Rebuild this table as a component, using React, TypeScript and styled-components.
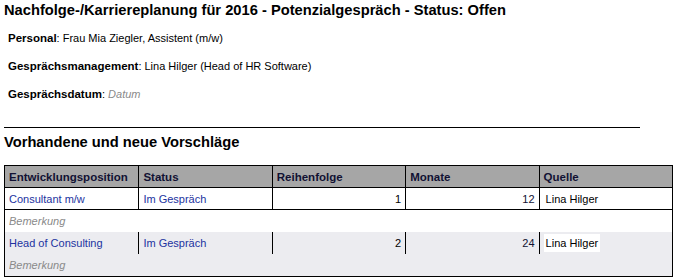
import React from "react";
import styled, { createGlobalStyle } from "styled-components";

const Global = createGlobalStyle`
  html, body { margin: 0; padding: 0; background: #fff; }
  body { font-family: "Liberation Sans", Arial, sans-serif; color: #000; }
`;

const Page = styled.div`
  padding: 0 5px 0 4px;
`;

const Title = styled.h1`
  margin: 0;
  padding-top: 1px;
  font-size: 14.7px;
  font-weight: bold;
  line-height: 18px;
`;

const Facts = styled.div`
  display: flex;
  flex-direction: column;
  gap: 10px;
  padding: 10px 0 0 4px;
`;

const Fact = styled.div`
  font-size: 11px;
  line-height: 18px;
`;

const Label = styled.span`
  font-weight: bold;
  font-size: 11.5px;
`;

const Placeholder = styled.span`
  color: #8a8a8a;
  font-style: italic;
`;

const Rule = styled.hr`
  margin: 24px 0 0 0;
  width: 636px;
  border: 0;
  border-top: 1px solid #000;
`;

const Section = styled.h2`
  margin: 5px 0 0 0;
  font-size: 14.7px;
  line-height: 18px;
  font-weight: bold;
`;

const Table = styled.div`
  margin-top: 14px;
  width: 669px;
  border: 1px solid #000;
  box-sizing: border-box;
  font-size: 11px;
`;

const Row = styled.div<{ $bg?: string; $line?: boolean }>`
  display: grid;
  grid-template-columns: repeat(5, 1fr);
  height: 22px;
  background: ${(p) => p.$bg ?? "#fff"};
  border-bottom: ${(p) => (p.$line ? "1px solid #000" : "none")};
  box-sizing: border-box;
`;

const Cell = styled.div<{ $right?: boolean; $first?: boolean; $color?: string }>`
  display: flex;
  align-items: center;
  justify-content: ${(p) => (p.$right ? "flex-end" : "flex-start")};
  padding: 0 4px;
  border-left: ${(p) => (p.$first ? "none" : "1px solid #000")};
  color: ${(p) => p.$color ?? "#000"};
  white-space: nowrap;
`;

const HeadCell = styled(Cell)`
  font-weight: bold;
  font-size: 11.5px;
  color: #111133;
`;

const NoteRow = styled.div<{ $bg?: string }>`
  height: 22px;
  display: flex;
  align-items: center;
  padding: 0 4px;
  background: ${(p) => p.$bg ?? "#fff"};
  color: #8a8a8a;
  font-style: italic;
  box-sizing: border-box;
`;

const Source = styled.span`
  background: #fff;
  padding: 3px 2px;
`;

const LINK = "#2233a0";

type Entry = { position: string; status: string; order: string; months: string; source: string };

const entries: Entry[] = [
  { position: "Consultant m/w", status: "Im Gespräch", order: "1", months: "12", source: "Lina Hilger" },
  { position: "Head of Consulting", status: "Im Gespräch", order: "2", months: "24", source: "Lina Hilger" },
];

export default function App() {
  return (
    <Page>
      <Global />
      <Title>Nachfolge-/Karriereplanung für 2016 - Potenzialgespräch - Status: Offen</Title>
      <Facts>
        <Fact>
          <Label>Personal</Label>: Frau Mia Ziegler, Assistent (m/w)
        </Fact>
        <Fact>
          <Label>Gesprächsmanagement</Label>: Lina Hilger (Head of HR Software)
        </Fact>
        <Fact>
          <Label>Gesprächsdatum</Label>: <Placeholder>Datum</Placeholder>
        </Fact>
      </Facts>
      <Rule />
      <Section>Vorhandene und neue Vorschläge</Section>
      <Table>
        <Row $bg="#a6a6a6" $line>
          <HeadCell $first>Entwicklungsposition</HeadCell>
          <HeadCell>Status</HeadCell>
          <HeadCell>Reihenfolge</HeadCell>
          <HeadCell>Monate</HeadCell>
          <HeadCell>Quelle</HeadCell>
        </Row>
        {entries.map((e, i) => {
          const bg = i % 2 ? "#ececf0" : "#fff";
          return (
            <React.Fragment key={e.position}>
              <Row $bg={bg} $line={i === 0}>
                <Cell $first $color={LINK}>{e.position}</Cell>
                <Cell $color={LINK}>{e.status}</Cell>
                <Cell $right>{e.order}</Cell>
                <Cell $right $color="#111133">{e.months}</Cell>
                <Cell>
                  <Source>{e.source}</Source>
                </Cell>
              </Row>
              <NoteRow $bg={bg}>Bemerkung</NoteRow>
            </React.Fragment>
          );
        })}
      </Table>
    </Page>
  );
}
